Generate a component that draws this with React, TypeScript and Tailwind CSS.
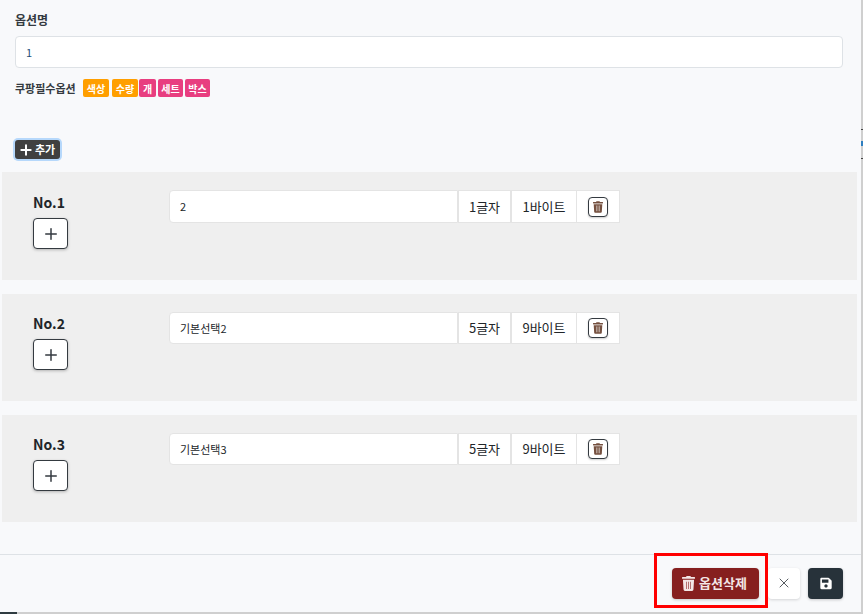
import { Plus, X } from "lucide-react";

function TrashIcon({ className }: { className: string }) {
  return (
    <svg viewBox="0 0 448 512" className={className} fill="currentColor" fillRule="evenodd">
      <path d="M432 32H312l-9.400-18.700A24 24 0 0 0 281.100 0H166.800a23.720 23.720 0 0 0-21.400 13.300L136 32H16A16 16 0 0 0 0 48v32a16 16 0 0 0 16 16h416a16 16 0 0 0 16-16V48a16 16 0 0 0-16-16zM53.200 467a48 48 0 0 0 47.900 45h245.800a48 48 0 0 0 47.900-45L416 128H32zM146 192h20v256h-20zM214 192h20v256h-20zM282 192h20v256h-20z" />
    </svg>
  );
}

function SaveIcon({ className }: { className: string }) {
  return (
    <svg viewBox="0 0 448 512" className={className} fill="currentColor">
      <path d="M433.900 129.900l-83.900-83.900A48 48 0 0 0 316.100 32H48C21.500 32 0 53.500 0 80v352c0 26.500 21.500 48 48 48h352c26.500 0 48-21.500 48-48V163.900a48 48 0 0 0-14.100-34zM224 416c-35.300 0-64-28.700-64-64 0-35.300 28.700-64 64-64s64 28.700 64 64c0 35.300-28.700 64-64 64zm96-304.500V212c0 6.600-5.400 12-12 12H76c-6.600 0-12-5.400-12-12V108c0-6.600 5.400-12 12-12h228.500c3.200 0 6.200 1.300 8.500 3.500l3.500 3.500c2.200 2.200 3.500 5.300 3.500 8.500z" />
    </svg>
  );
}

function Row({ no, value, chars, bytes, className, labelTop, inputHeight }: { no: number; value: string; chars: string; bytes: string; className: string; labelTop: string; inputHeight: string }) {
  return (
    <div className={`ml-[2px] mr-[4px] flex bg-[#efefef] pl-[31px] ${className}`}>
      <div className="w-[136px] shrink-0">
        <div className={`text-[14px] leading-[20px] font-bold text-[#212529] ${labelTop}`}>No.{no}</div>
        <button className="mt-[6px] flex h-[31px] w-[35px] items-center justify-center rounded-[4px] border border-[#343a40] bg-white shadow-[0_1px_3px_rgba(0,0,0,0.25)]">
          <Plus className="h-[18px] w-[18px] text-[#343a40]" strokeWidth={2} />
        </button>
      </div>
      <div className={`mt-[18px] flex items-stretch text-[13px] text-[#212529] ${inputHeight}`}>
        <div className="flex w-[289px] items-center rounded-l-[4px] border border-[#e4e4e4] bg-white pl-[10px] text-[11px]">{value}</div>
        <div className="flex w-[53px] items-center justify-center border border-[#e4e4e4] bg-white">{chars}</div>
        <div className="flex w-[66px] items-center justify-center border border-[#e4e4e4] bg-white">{bytes}</div>
        <div className="ml-[-1px] flex w-[44px] items-center justify-center border border-[#e4e4e4] bg-white">
          <span className="flex h-[20px] w-[20px] items-center justify-center rounded-[4px] border border-[#343a40] bg-white shadow-[0_1px_2px_rgba(0,0,0,0.2)]">
            <TrashIcon className="h-[12px] w-[10px] text-[#75503f]" />
          </span>
        </div>
      </div>
    </div>
  );
}

function Badge({ label, color, className = "" }: { label: string; color: string; className?: string }) {
  return (
    <span className={`flex h-[18px] items-center justify-center rounded-[2px] text-[10px] font-bold text-white ${color} ${className}`}>{label}</span>
  );
}

export default function App() {
  return (
    <div className="relative flex h-[614px] w-[863px] overflow-hidden bg-[#cfcfcf] font-['Noto_Sans_CJK_KR','Noto_Sans',sans-serif]">
      <div className="flex h-[612px] w-[861px] shrink-0 flex-col bg-[#f8f9fb]">
        <div className="h-[554px] shrink-0">
          <div className="ml-[15px] mt-[12px] text-[12px] leading-[16px] font-bold text-[#343a40]">옵션명</div>
          <div className="ml-[15px] mt-[8px] flex h-[32px] w-[828px] items-center rounded-[4px] border border-[#dee2e6] bg-white pl-[10px] text-[11px] text-[#1f4e79]">1</div>
          <div className="ml-[15px] mt-[11px] flex h-[18px] items-center">
            <span className="w-[68px] text-[11px] font-bold text-[#343a40]">쿠팡필수옵션</span>
            <Badge label="색상" color="bg-[#ff9f00]" className="w-[26px]" />
            <Badge label="수량" color="bg-[#ff9f00]" className="ml-[3px] w-[26px]" />
            <Badge label="개" color="bg-[#e83e80]" className="ml-[1px] w-[17px]" />
            <Badge label="세트" color="bg-[#e83e80]" className="ml-[2px] w-[25px]" />
            <Badge label="박스" color="bg-[#e83e80]" className="ml-[2px] w-[25px]" />
          </div>
          <button className="ml-[15px] mt-[43px] flex h-[19px] w-[45px] items-center justify-center gap-[1px] rounded-[3px] bg-[#404040] text-[11px] font-bold text-white ring-2 ring-[#b6d8fb]">
            <Plus className="ml-[-2px] h-[16px] w-[16px]" strokeWidth={3} />
            추가
          </button>
          <Row no={1} value="2" chars="1글자" bytes="1바이트" labelTop="mt-[20px]" inputHeight="h-[33px]" className="mt-[13px] h-[108px]" />
          <Row no={2} value="기본선택2" chars="5글자" bytes="9바이트" labelTop="mt-[19px]" inputHeight="h-[32px]" className="mt-[14px] h-[107px]" />
          <Row no={3} value="기본선택3" chars="5글자" bytes="9바이트" labelTop="mt-[19px]" inputHeight="h-[32px]" className="mt-[14px] h-[107px]" />
        </div>
        <div className="flex h-[58px] items-center justify-end gap-[8px] border-t border-[#dee2e6] pr-[18px] pb-[1px]">
          <div className="relative">
            <button className="flex h-[31px] w-[87px] items-center justify-center gap-[4px] rounded-[4px] bg-[#861f1f] pr-[2px] text-[13px] font-bold text-[#f3e6e6] shadow-[0_1px_3px_rgba(0,0,0,0.2)]">
              <TrashIcon className="h-[15px] w-[13px]" />
              옵션삭제
            </button>
            <div className="absolute left-[-18px] top-[-15px] h-[55px] w-[114px] border-[3px] border-[#ff0000]" />
          </div>
          <button className="ml-[1px] flex h-[31px] w-[32px] items-center justify-center rounded-[4px] bg-white text-[#343a40] shadow-[0_1px_3px_rgba(0,0,0,0.15)]">
            <X className="h-[16px] w-[16px]" strokeWidth={1.25} />
          </button>
          <button className="flex h-[31px] w-[35px] items-center justify-center rounded-[4px] bg-[#27323a] text-white shadow-[0_1px_3px_rgba(0,0,0,0.2)]">
            <SaveIcon className="h-[13px] w-[12px]" />
          </button>
        </div>
      </div>
      <div className="absolute bottom-0 left-0 h-[2px] w-[17px] bg-[#2f3b40]" />
      <div className="absolute left-[861px] top-[129px] h-[1px] w-[2px] bg-[#444444]" />
      <div className="absolute left-[861px] top-[141px] h-[5px] w-[2px] bg-[#2f7fc0]" />
      <div className="absolute left-[861px] top-[158px] h-[1px] w-[2px] bg-[#444444]" />
    </div>
  );
}
